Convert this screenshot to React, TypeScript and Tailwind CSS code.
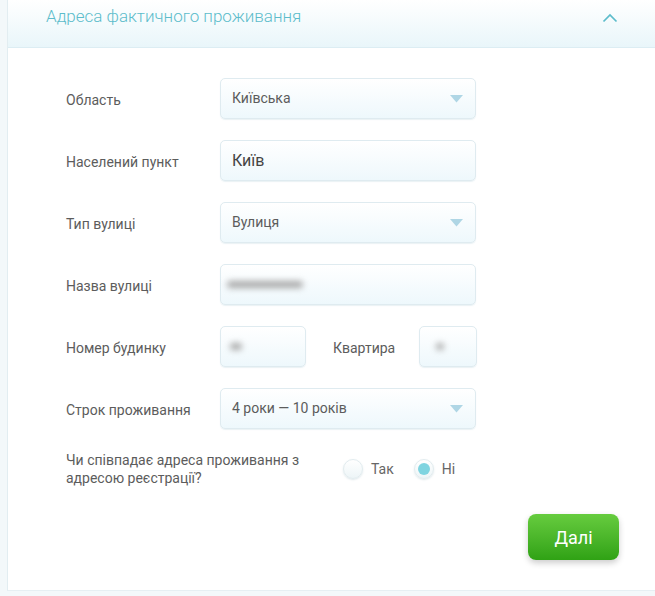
import { ReactNode } from 'react';

const fieldBox =
  'h-[41px] rounded-[5px] border border-[#dfebf0] bg-gradient-to-b from-white to-[#eef8fc] shadow-[0_1px_1px_rgba(150,190,205,0.2)]';

function Caret() {
  return (
    <svg width="13" height="8" viewBox="0 0 13 8" className="shrink-0">
      <path d="M0 0 L13 0 L6.5 7.5 Z" fill="#afd6e5" />
    </svg>
  );
}

function SelectField({ value }: { value: string }) {
  return (
    <div className={`${fieldBox} w-[256px] flex items-center justify-between pl-[11px] pr-[12px]`}>
      <span className="text-[14px] text-[#5c5c5c]">{value}</span>
      <Caret />
    </div>
  );
}

function Blur({ w }: { w: number }) {
  return (
    <span
      className="block h-[7px] rounded-full bg-[#a8a8a8] blur-[3px]"
      style={{ width: w }}
    />
  );
}

function Row({ label, children }: { label: string; children: ReactNode }) {
  return (
    <div className="flex items-center">
      <div className="w-[154px] shrink-0 pt-[3px] text-[14px] text-[#5c5c5c]">{label}</div>
      {children}
    </div>
  );
}

function Radio({ checked, label }: { checked?: boolean; label: string }) {
  return (
    <label className="flex items-center gap-[8px]">
      <span className="flex h-[20px] w-[20px] items-center justify-center rounded-full border border-[#e2ecef] bg-gradient-to-b from-white to-[#edf5f7] shadow-[0_1px_2px_rgba(150,180,190,0.3)]">
        {checked && <span className="h-[12px] w-[12px] rounded-full bg-[#7fd4e0]" />}
      </span>
      <span className="text-[14px] text-[#666]">{label}</span>
    </label>
  );
}

export default function App() {
  return (
    <div
      className="flex min-h-[596px] w-full bg-[#f3f8fa]"
      style={{ fontFamily: 'Roboto, "Noto Sans", sans-serif' }}
    >
      <div className="w-[7px] shrink-0" />
      <div className="flex-1 self-start border-l border-[#e2edf1] bg-white border-b border-b-[#e6eff3]">
        <div className="flex h-[48px] items-center justify-between border-b border-[#dcedf3] bg-gradient-to-b from-white to-[#e9f6fa] pl-[38px] pr-[36px]">
          <h2 className="text-[17px] font-light text-[#5cbccb] -mt-[14px]">Адреса фактичного проживання</h2>
          <svg width="18" height="12" viewBox="0 0 18 12" className="-mt-[12px]">
            <path d="M2.5 9.5 L9 3 L15.5 9.5" fill="none" stroke="#5cbccb" strokeWidth="1.7" />
          </svg>
        </div>

        <div className="pl-[58px] pr-[30px] pt-[30px] pb-[30px]">
          <div className="flex flex-col gap-[21px]">
            <Row label="Область">
              <SelectField value="Київська" />
            </Row>
            <Row label="Населений пункт">
              <div className={`${fieldBox} w-[256px] flex items-center px-[11px]`}>
                <span className="text-[16px] text-[#444]">Київ</span>
              </div>
            </Row>
            <Row label="Тип вулиці">
              <SelectField value="Вулиця" />
            </Row>
            <Row label="Назва вулиці">
              <div className={`${fieldBox} w-[256px] flex items-center px-[6px]`}>
                <Blur w={76} />
              </div>
            </Row>
            <Row label="Номер будинку">
              <div className={`${fieldBox} w-[86px] flex items-center px-[9px]`}>
                <Blur w={12} />
              </div>
              <div className="w-[113px] pl-[27px] pt-[3px] text-[14px] text-[#5c5c5c]">Квартира</div>
              <div className={`${fieldBox} w-[58px] flex items-center px-[16px]`}>
                <Blur w={8} />
              </div>
            </Row>
            <Row label="Строк проживання">
              <SelectField value="4 роки — 10 років" />
            </Row>
          </div>

          <div className="mt-[22px] flex items-center">
            <div className="w-[277px] shrink-0 text-[14px] leading-[18px] text-[#5c5c5c]">
              Чи співпадає адреса проживання з адресою реєстрації?
            </div>
            <div className="flex items-center gap-[20px]">
              <Radio label="Так" />
              <Radio checked label="Ні" />
            </div>
          </div>

          <div className="mt-[27px] flex justify-end pr-[6px]">
            <button className="h-[46px] w-[91px] rounded-[8px] bg-gradient-to-b from-[#66cc3e] to-[#2fa214] text-[18px] text-white shadow-[0_3px_6px_rgba(0,0,0,0.2)]">
              Далі
            </button>
          </div>
        </div>
      </div>
    </div>
  );
}
